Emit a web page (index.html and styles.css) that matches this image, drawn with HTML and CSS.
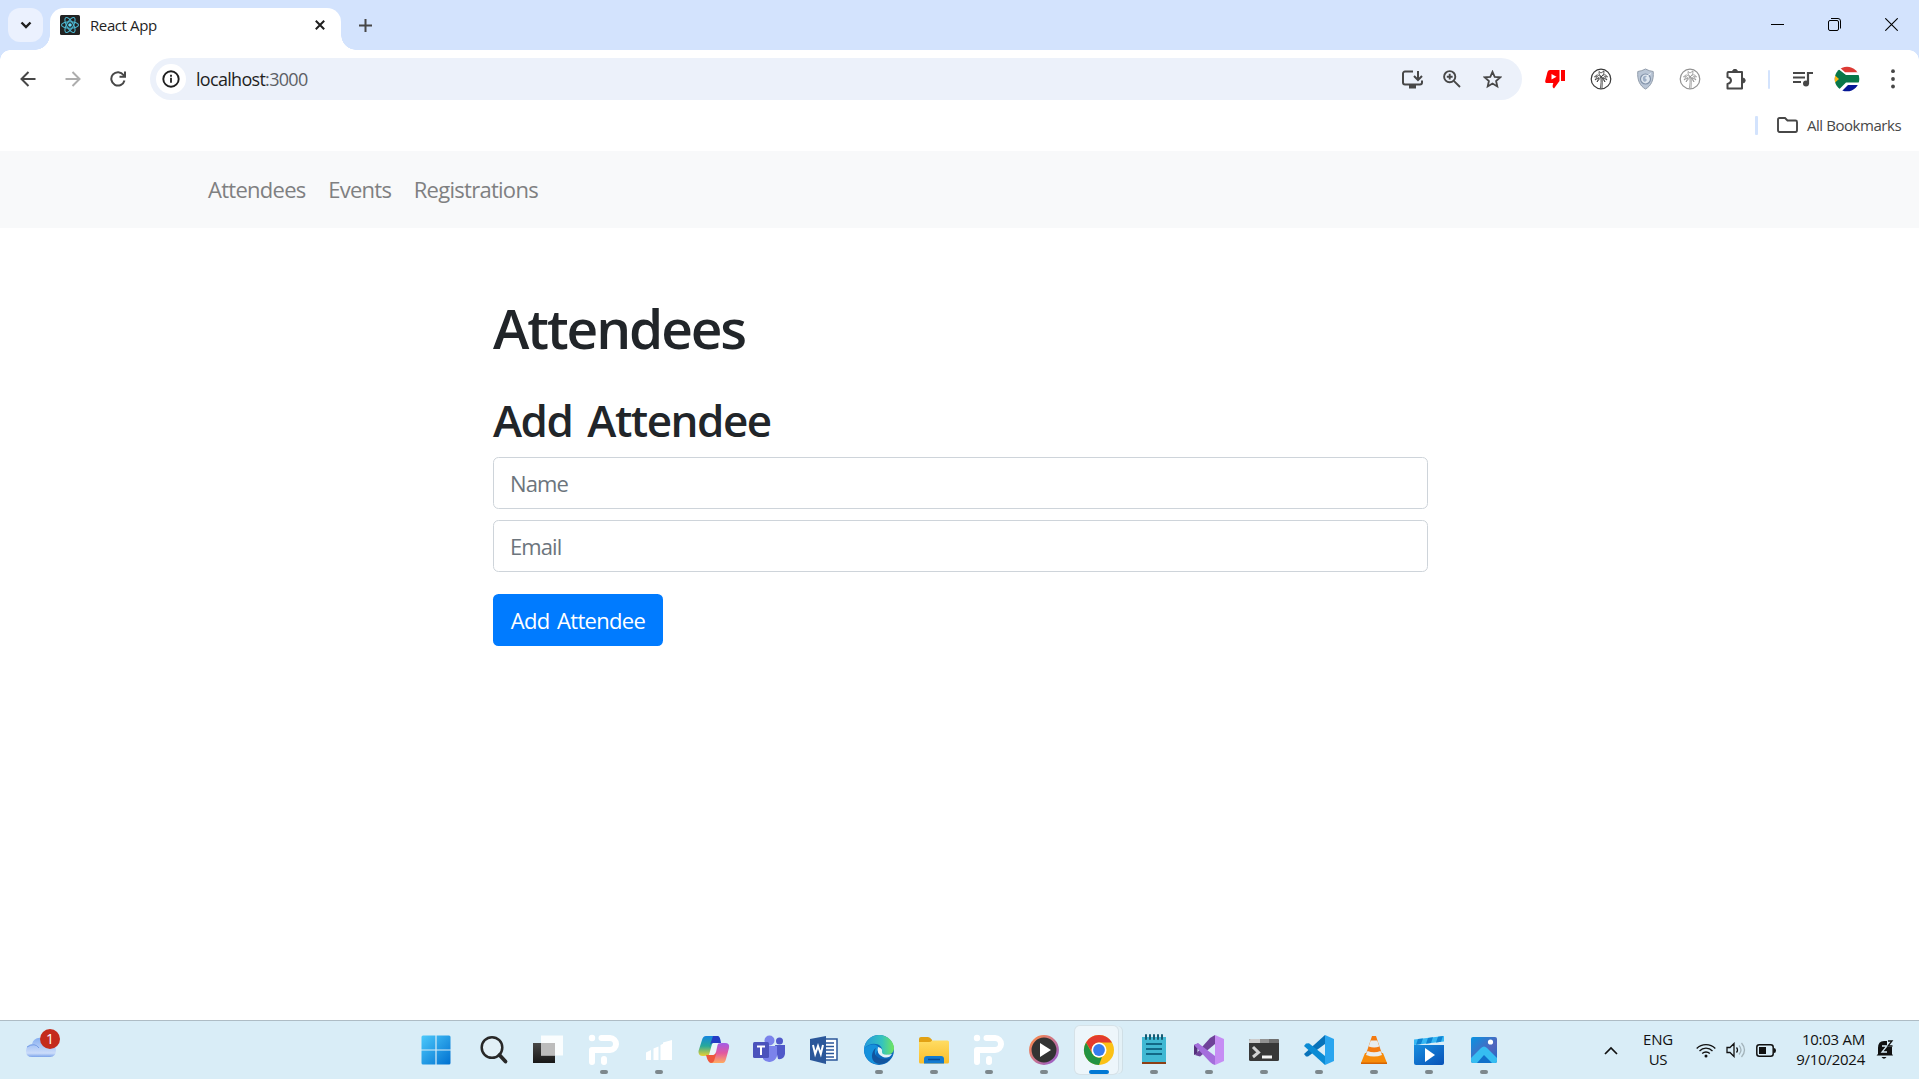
FILE: index.html
```html
<!DOCTYPE html>
<html lang="en">
<head>
<meta charset="utf-8">
<title>React App</title>
<link rel="stylesheet" href="styles.css">
</head>
<body>
<header class="tabstrip">
  <button class="tab-search" aria-label="Search tabs"><svg width="12" height="8" viewBox="0 0 12 8"><path d="M1.500 1.500 6 6l4.500-4.500" fill="none" stroke="#1f1f1f" stroke-width="2.400"/></svg></button>
  <div class="tab">
    <svg width="20" height="20" viewBox="0 0 20 20"><rect width="20" height="20" rx="1.500" fill="#222"/><g fill="none" stroke="#4cb8d2" stroke-width="1.100"><ellipse cx="10" cy="10" rx="8.500" ry="3.300"/><ellipse cx="10" cy="10" rx="8.500" ry="3.300" transform="rotate(60 10 10)"/><ellipse cx="10" cy="10" rx="8.500" ry="3.300" transform="rotate(120 10 10)"/></g><circle cx="10" cy="10" r="1.800" fill="#61dafb"/></svg>
    <span class="tab-title">React App</span>
    <svg class="tab-close" width="10" height="10" viewBox="0 0 10 10"><path d="M.8.800 9.200 9.200M9.200.800.800 9.200" stroke="#1f1f1f" stroke-width="2"/></svg>
  </div>
  <svg class="new-tab" width="13" height="13" viewBox="0 0 13 13"><path d="M6.500 0v13M0 6.500h13" stroke="#474747" stroke-width="2"/></svg>
  <div class="window-buttons">
    <svg width="13" height="13" viewBox="0 0 13 13"><path d="M0 6.500h13" stroke="#000"/></svg>
    <svg width="13" height="13" viewBox="0 0 13 13" fill="none" stroke="#000"><rect x=".5" y="2.500" width="10" height="10" rx="1.500"/><path d="M3 .5h7a2.500 2.500 0 0 1 2.500 2.500v7.500"/></svg>
    <svg width="13" height="13" viewBox="0 0 13 13"><path d="M.3.300 12.700 12.700M12.700.300.300 12.700" stroke="#000" stroke-width="1.100"/></svg>
  </div>
</header>
<div class="toolbar">
  <nav class="history">
    <svg width="16" height="16" viewBox="0 0 16 16" fill="none" stroke="#474747" stroke-width="2"><path d="M15.500 8H2M8.500 1 1.500 8l7 7"/></svg>
    <svg width="16" height="16" viewBox="0 0 16 16" fill="none" stroke="#adadad" stroke-width="2"><path d="M.5 8H14M7.500 1l7 7-7 7"/></svg>
    <svg width="16" height="16" viewBox="0 0 16 16" fill="none" stroke="#474747" stroke-width="2"><path d="M14.500 9.500A6.700 6.700 0 1 1 13.500 4l1 1.500M15 .5v5.300H9.500"/></svg>
  </nav>
  <div class="omnibox">
    <span class="site-info"><svg width="18" height="18" viewBox="0 0 18 18"><circle cx="9" cy="9" r="7.700" fill="none" stroke="#1f1f1f" stroke-width="1.900"/><path d="M9 7.700v5M9 4.800v2" stroke="#1f1f1f" stroke-width="1.800"/></svg></span>
    <span class="url">localhost<i>:3000</i></span>
    <svg class="omni-install" width="21" height="19" viewBox="0 0 21 19" fill="none" stroke="#474747" stroke-width="2"><path d="M11 1.500H3a2 2 0 0 0-2 2v9a2 2 0 0 0 2 2h15a2 2 0 0 0 2-2v-2M16 1v9M12 6l4 4 4-4"/><path d="M7 15h7v3.500H7z" fill="#474747" stroke="none"/></svg>
    <svg class="omni-zoom" width="18" height="18" viewBox="0 0 18 18" fill="none" stroke="#474747" stroke-width="1.900"><circle cx="6.700" cy="6.700" r="5.600"/><path d="M10.800 10.800 17 17M6.700 3.800v5.800M3.800 6.700h5.800"/></svg>
    <svg class="omni-star" width="19" height="19" viewBox="0 0 19 19"><path d="m9.500 1.800 2.200 5 5.600.5-4.200 3.700 1.200 5.500-4.800-2.900-4.800 2.900L5.900 11 1.700 7.300l5.600-.5z" fill="none" stroke="#474747" stroke-width="1.800"/></svg>
  </div>
  <div class="extensions">
    <svg width="20" height="20" viewBox="0 0 20 20" fill="red"><path d="M5 1h9.500v11L9 19.500c-2-1-1.500-3-.7-5.500H1.500C.3 14 0 12.700.3 11.500L2.500 3C3 1.700 3.800 1 5 1zM16 1h4v11h-4z"/><path d="m6.500 5 5 2.800-5 2.800z" fill="#fff"/></svg>
    <svg width="22" height="22" viewBox="0 0 22 22" fill="none" stroke="#383838"><circle cx="11" cy="11" r="9.800" stroke-width="1.200"/><path d="M10.500 20q.9-6 .5-11M12 20q.6-6 0-11M11 9Q7 5 4.500 9l3-.5L5 12l4-2.500-2 4.500 4-5Q15 4.500 17.500 9l-3-.5 2.500 3.500-4-2.500 2 4.500-3.500-5Q8 6 9 3.500l2 1.500 3-2q1 3-3 6z" stroke-width=".8"/></svg>
    <svg width="17" height="22" viewBox="0 0 17 22"><path d="M8.500 1Q12 3 16.200 3.500C17 12 14 18 8.500 21 3 18 0 12 .8 3.500Q5 3 8.500 1z" fill="#bac6d6" stroke="#929dab"/><circle cx="8.500" cy="11" r="5" fill="#dfe7f0" stroke="#8393a9" stroke-width="1.200"/><path d="M6 9q2-2 4-1l-2 2 2 2-2 2q-3-1-2-5z" fill="#9fb0c6"/><path d="m10 8 4-2.500" stroke="#eef3f8"/></svg>
    <svg width="22" height="22" viewBox="0 0 22 22" fill="none" stroke="#929292"><circle cx="11" cy="11" r="9.800" stroke-width="1.200"/><path d="M10.500 20q.9-6 .5-11M12 20q.6-6 0-11M11 9Q7 5 4.500 9l3-.5L5 12l4-2.500-2 4.500 4-5Q15 4.500 17.500 9l-3-.5 2.500 3.500-4-2.500 2 4.500-3.500-5Q8 6 9 3.500l2 1.500 3-2q1 3-3 6z" stroke-width=".8"/></svg>
    <svg width="21" height="21" viewBox="0 0 21 21"><path d="M2.500 3H16v16.500H1.500V15q3.500-.8 3.500-3.500T1.500 8V4q0-1 1-1z" fill="none" stroke="#474747" stroke-width="2" stroke-linejoin="round"/><path d="M6.500 3a2.500 2.700 0 0 1 5 0zM16.500 9a2.700 2.500 0 0 1 0 5z" fill="#474747" stroke="#474747"/></svg>
  </div>
  <span class="divider"></span>
  <svg class="media" width="20" height="17" viewBox="0 0 20 17"><path d="M0 2h12M0 6.500h12M0 11h8" stroke="#474747" stroke-width="2"/><circle cx="13" cy="12.500" r="3" fill="#474747"/><path d="M15 13V2h5" fill="none" stroke="#474747" stroke-width="2.200"/></svg>
  <svg class="profile" width="26" height="26" viewBox="0 0 26 26"><clipPath id="round"><circle cx="13" cy="13" r="12.300"/></clipPath><g clip-path="url(#round)"><path fill="#fff" d="M0 0h26v26H0z"/><path fill="#dd3a34" d="M4 0h22v6.200H11z"/><path fill="#051796" d="M7 26 14 19h12v7z"/><path fill="#087749" d="M0 2h3l9 7h14v7.500H12L5 23.500H0z"/><path fill="#fbb615" d="M0 8.500 5 13l-5 4.500z"/></g></svg>
  <svg class="menu" width="4" height="20" viewBox="0 0 4 20" fill="#474747"><circle cx="2" cy="2.200" r="1.900"/><circle cx="2" cy="10" r="1.900"/><circle cx="2" cy="17.500" r="1.900"/></svg>
</div>
<div class="bookmarks">
  <span class="divider wide"></span>
  <svg width="21" height="16" viewBox="0 0 21 16"><path d="M1 13V2.500Q1 1 2.500 1H8l2.500 2.500h8Q20 3.500 20 5v8q0 2-1.500 2h-16Q1 15 1 13z" fill="none" stroke="#474747" stroke-width="1.900"/></svg>
  <span class="bookmarks-label">All Bookmarks</span>
</div>
<main class="page">
  <nav class="navbar"><a>Attendees</a><a>Events</a><a>Registrations</a></nav>
  <section class="content">
    <h1>Attendees</h1>
    <h2>Add Attendee</h2>
    <form>
      <input type="text" placeholder="Name">
      <input type="text" placeholder="Email">
      <button type="button" class="submit">Add Attendee</button>
    </form>
  </section>
</main>
<footer class="taskbar">
  <svg width="0" height="0" class="defs"><defs>
    <linearGradient id="win" x1="0" y1="0" x2="1" y2="1"><stop stop-color="#4cc9fb"/><stop offset="1" stop-color="#0070d0"/></linearGradient>
    <linearGradient id="dark" x2="0" y2="1"><stop stop-color="#484848"/><stop offset="1" stop-color="#171717"/></linearGradient>
    <linearGradient id="cpl" x2="0" y2="1"><stop stop-color="#1585df"/><stop offset=".5" stop-color="#27a99a"/><stop offset="1" stop-color="#ecd12f"/></linearGradient>
    <linearGradient id="cpr" x2="0" y2="1"><stop stop-color="#a25ce6"/><stop offset=".5" stop-color="#e2589f"/><stop offset="1" stop-color="#ffac61"/></linearGradient>
    <linearGradient id="edge"><stop stop-color="#2499dd"/><stop offset=".6" stop-color="#35c3be"/><stop offset="1" stop-color="#71e65c"/></linearGradient>
    <linearGradient id="fold" x2="0" y2="1"><stop stop-color="#ffdc63"/><stop offset="1" stop-color="#fabd29"/></linearGradient>
    <linearGradient id="ring" x2="1" y2="1"><stop stop-color="#ff8b45"/><stop offset="1" stop-color="#945bd2"/></linearGradient>
    <linearGradient id="mov" x2="1" y2="1"><stop stop-color="#178edf"/><stop offset="1" stop-color="#0951b7"/></linearGradient>
    <linearGradient id="pho" x2="1" y2="1"><stop stop-color="#0794e2"/><stop offset=".6" stop-color="#5165bd"/><stop offset="1" stop-color="#166ecb"/></linearGradient>
    <linearGradient id="cloud" x2="0" y2="1"><stop stop-color="#88aff0"/><stop offset=".8" stop-color="#cbdcfa"/><stop offset="1" stop-color="#7ba3ea"/></linearGradient>
    <symbol id="ip" viewBox="0 0 32 32"><g fill="none" stroke="#fff" stroke-linecap="round" stroke-linejoin="round"><path d="M4 28V16h18a5.500 5.500 0 0 0 0-12H13.500" stroke-width="6"/><path d="M16 25v3" stroke-width="6"/></g><circle cx="4" cy="4" r="3.200" fill="#fff"/></symbol>
  </defs></svg>
  <div class="weather"><svg width="32" height="24" viewBox="0 0 32 24"><path d="M7 9a8.500 8.500 0 0 1 16-1 7 7 0 0 1 8 7q0 7-6 7H7q-6 0-6-6 0-6 6-7z" fill="url(#cloud)"/><path d="M2 12q8-5 12 1" fill="none" stroke="#769ee7"/></svg><span class="badge">1</span></div>
  <div class="apps">
    <span class="app start"><svg viewBox="0 0 32 32"><rect x="1.500" y="1.500" width="29" height="29" rx="1.500" fill="url(#win)"/><path d="M16 1v30M1 16h30" stroke="#d9edf7" stroke-width="1.200"/></svg></span>
    <span class="app"><svg viewBox="0 0 32 32" fill="none" stroke="#282828"><circle cx="14" cy="13.500" r="10.300" stroke-width="2.500" fill="#e2f0f7"/><path d="m21.500 21 6 6.500" stroke-width="3.800" stroke-linecap="round"/></svg></span>
    <span class="app"><svg viewBox="0 0 32 32"><path d="M0 9h22v20H0z" fill="url(#dark)"/><path d="M8 1.500h22v20H8z" fill="#fff" opacity=".85"/><path d="M8 9h14v12.500H8z" fill="#bcbcbc"/></svg></span>
    <span class="app on"><svg><use href="#ip"/></svg></span>
    <span class="app on"><svg viewBox="0 0 32 32" fill="#fff"><path d="M3 18.500 8 16v10H3zM10.500 14.500l5-2V26h-5zM17.500 11l3-1.500V26h-3zM20 8.500 29 6v20h-9z"/></svg></span>
    <span class="app"><svg viewBox="0 0 32 32"><path d="M8 2h10q3 0 4 4l-7 2q-2 12-4 13-2 1-6 1-5 0-4.500-5L4 6q1-4 4-4z" fill="url(#cpl)"/><path d="M15 2h5q2 0 3 7h-8q-3 0-4 5z" fill="#233bc4"/><path d="M24 29H14q-3 0-4-4l5-2q2-9 4-12 1-2 5-2h3q5 0 4 5l-3 11q-1 4-3 4z" fill="url(#cpr)"/><path d="M8 21h7q3 0 4-4l-3 10q-1 2-3 2-3 0-5-8z" fill="#ee573c"/><path d="m14 10-3 11h4q2 0 3-3l2-9h-3q-2 0-3 1z" fill="#eaf5f8"/></svg></span>
    <span class="app"><svg viewBox="0 0 32 32"><circle cx="26.500" cy="7" r="3.500" fill="#5059c9"/><path d="M22 11h10v9q-1 6-7 5z" fill="#5059c9"/><circle cx="16.500" cy="6.500" r="5" fill="#7b83eb"/><path d="M10 12h14v10a8 8 0 0 1-14 3z" fill="#7b83eb"/><rect y="8" width="16" height="16" rx="1.500" fill="#4b53bc"/><path d="M4 12.500h8M8 12.500V21" stroke="#fff" stroke-width="2"/></svg></span>
    <span class="app"><svg viewBox="0 0 32 32"><path d="M16 5h13v21H16z" fill="#fff" stroke="#2b579a" stroke-width="1.500"/><path d="M17 9h9M17 12.500h9M17 16h9M17 19.500h9M17 23h9" stroke="#2b579a" stroke-width="1.400"/><path d="M2 5 18 2v28L2 26z" fill="#2b579a"/><path d="m5 11 2.200 9L10 12l2.800 8L15 11" fill="none" stroke="#fff" stroke-width="2"/></svg></span>
    <span class="app on"><svg viewBox="0 0 32 32"><circle cx="16" cy="16" r="15" fill="#0c68bd"/><path d="M1 15C2 6 9 1 16 1c9 0 15 7 15 13 0 5-4 7-8 7-3 0-5-1-4-3C21 10 8 6 1 15z" fill="url(#edge)"/><path d="M1 15c4-6 15-6 15 0-6 5-2 12 4 14-9 4-19-3-19-14z" fill="#1591dc"/><path d="M13 14c-4 6 2 14 15 10-6 9-20 8-19-3 .4-3 2-6 4-7z" fill="#12559f"/><path d="M15 13q5 1 4 5 0 4 10 2-3 5-9 3-7-3-5-10z" fill="#e3f2f7"/></svg></span>
    <span class="app on"><svg viewBox="0 0 32 32"><path d="M1 8V5q0-2 2-2h7q2 0 4 3v4H1z" fill="#e2a114"/><rect x="1" y="6.500" width="30" height="23" rx="1.500" fill="url(#fold)"/><path d="M1 5h11q1.500 0 2 1.500Q13 8 11 8H1z" fill="#e2a114"/><path d="M6 29.500V25q0-3 3-3h14q3 0 3 3v4.500z" fill="#137bd0"/><path d="M10 25.500h12" stroke="#084b93" stroke-width="1.500"/></svg></span>
    <span class="app on"><svg><use href="#ip"/></svg></span>
    <span class="app on"><svg viewBox="0 0 32 32"><circle cx="16" cy="16" r="13.700" fill="#333" stroke="url(#ring)" stroke-width="2.500"/><path d="m12 9 11 7-11 7z" fill="#fff"/></svg></span>
    <span class="app on active"><svg viewBox="0 0 32 32"><circle cx="16" cy="16" r="15" fill="#fbc116"/><path d="M3 8.500A15 15 0 0 1 29 8.500H16a7.500 7.500 0 0 0-6.500 11z" fill="#e33b2e"/><path d="M3 8.500 9.500 20A7.500 7.500 0 0 0 19 23l-3 8A15 15 0 0 1 3 8.500z" fill="#229342"/><circle cx="16" cy="16" r="7.500" fill="#fff"/><circle cx="16" cy="16" r="5.900" fill="#367ced"/></svg></span>
    <span class="app on"><svg viewBox="0 0 32 32"><path d="M4 26h24v4H4z" fill="#8d3f15"/><rect x="4" y="3" width="24" height="25" fill="#40b8d3"/><path d="M8 10h16M8 15h16M8 20h16" stroke="#126887" stroke-width="2"/><path d="M7 1v4M11 1v4M15 1v4M19 1v4M23 1v4" transform="translate(1)" stroke="#155b73" stroke-width="2" stroke-linecap="round"/></svg></span>
    <span class="app on"><svg viewBox="0 0 32 32"><path d="M1 11 5 9.500l4 4-3.500 2.500v3L1 21z" fill="#55307c"/><path d="m4.500 14.500 4 2.500-4 2.500z" fill="#d9edf7"/><path d="M22 1v9L7 22.500 2 21 17 4z" fill="#6e4299"/><path d="m1 11 4-2 17 13v9q-2 0-5-3z" fill="#a46edc"/><path d="m22 1 9 4v22l-9 4z" fill="#c68df4"/></svg></span>
    <span class="app on"><svg viewBox="0 0 32 32"><rect x="1" y="5" width="30" height="22" rx="1.500" fill="#383838"/><path d="M1 9V6.500Q1 5 2.500 5H12v4z" fill="#ccc"/><path d="M12 5h9v4h-9z" fill="#929292"/><path d="M21 5h8.500Q31 5 31 6.500V9H21z" fill="#6f6f6f"/><path d="m5 13 5.500 5.500L5 23" fill="none" stroke="#d2d2d2" stroke-width="3"/><path d="M14 23h10" stroke="#f5f5f5" stroke-width="3"/></svg></span>
    <span class="app on"><svg viewBox="0 0 32 32"><path d="m1 20 2 2.500h2L22 10V1z" fill="#0872b9"/><path d="m1 12 2-2.500 3-.3L22 22v9z" fill="#0b8bd4"/><path d="m22 1 9 4v22l-9 4z" fill="#2aa5ef"/></svg></span>
    <span class="app on"><svg viewBox="0 0 32 32"><path d="M7 19h18l4 10H3z" fill="#f78c0b"/><path d="M3 28.500h26v1.500H3z" fill="#d56403"/><path d="M14 2h4l6 18q-8 4-16 0z" fill="#f47b11"/><path d="M12.700 6.500h6.600l2 6q-5 2-10.600 0zM9.500 17q6.500 2.500 13 0l1.500 4q-8 3-16 0z" fill="#e8edef"/></svg></span>
    <span class="app on"><svg viewBox="0 0 32 32"><path d="M1 11h30v18q0 2-2 2H3q-2 0-2-2z" fill="url(#mov)"/><path d="M1 5.500 31 2v5.500L1 11z" fill="#35b7f3"/><path d="m5 5 5-.6L8 10l-5 .7zM15 4l5-.7L18 9l-5 .7zM25 2.700l5-.7-2 5.800-5 .7z" fill="#0f83d2"/><path d="m12 14 10 7-10 7z" fill="#fff"/></svg></span>
    <span class="app on"><svg viewBox="0 0 32 32"><rect x="3" y="3" width="26" height="26" rx="2" fill="url(#pho)"/><path d="m3 24 10-10q3-3 6 0l10 10v3q0 2-2 2H5q-2 0-2-2z" fill="#36bdf1"/><path d="m9 29 7-8 8 8z" fill="#1170ca"/><circle cx="22.500" cy="8" r="2.600" fill="#fff"/></svg></span>
  </div>
  <div class="tray">
    <svg class="chev" width="14" height="9" viewBox="0 0 14 9"><path d="m1 8 6-6 6 6" fill="none" stroke="#111" stroke-width="1.700"/></svg>
    <div class="lang"><span>ENG</span><span>US</span></div>
    <svg class="wifi" width="20" height="16" viewBox="0 0 20 16" fill="none" stroke="#111" stroke-width="1.300"><path d="M.7 6.500a13 13 0 0 1 18.600 0M3.500 9a9 9 0 0 1 13 0M6.200 11.500a5.500 5.500 0 0 1 7.600 0"/><circle cx="10" cy="14" r="1.500" fill="#111" stroke="none"/></svg>
    <svg class="sound" width="20" height="16" viewBox="0 0 20 16" fill="none" stroke="#111" stroke-width="1.300"><path d="M1 5.500h3l4-4v13l-4-4H1zM10.500 5.500q2 2.500 0 5"/><path d="M13 3.500q4 4.500 0 9M15.500 1q6 7 0 14" stroke="#a3b3ba"/></svg>
    <svg class="battery" width="21" height="13" viewBox="0 0 21 13"><rect x=".8" y=".8" width="16.400" height="11.400" rx="2.500" fill="none" stroke="#111" stroke-width="1.500"/><rect x="3" y="3" width="7" height="7" fill="#111"/><path d="M18 4q2 0 2 2.500T18 9z" fill="#111"/></svg>
    <div class="clock"><span>10:03 AM</span><span>9/10/2024</span></div>
    <svg class="bell" width="18" height="20" viewBox="0 0 18 20"><path d="M2 14V8q0-7 6-7h3q5 1 5 6v7l1 1.500H.5zM5.500 17h5q-2.500 3.500-5 0z" fill="#111"/><path d="M6 6h5l-5 6h5" fill="none" stroke="#d9edf7" stroke-width="1.300"/><path d="M11-1h7v8h-7z" fill="#d9edf7"/><path d="M12 1h4l-4 5h4.500" fill="none" stroke="#111" stroke-width="1.300"/></svg>
  </div>
</footer>
</body>
</html>
```
FILE: styles.css
```css
* { box-sizing: border-box; }
body { margin: 0; width: 1919px; height: 1079px; overflow: hidden; display: flex; flex-direction: column; background: #fff; color: #212529; font-family: "Open Sans", "Noto Sans", sans-serif; }
svg { display: block; flex: none; }
button { border: 0; padding: 0; font-family: inherit; }

.tabstrip { height: 50px; flex: none; display: flex; align-items: flex-start; padding: 8px 21px 0 8px; background: #d3e3fd; }
.tab-search { width: 35px; height: 34px; border-radius: 12px; background: #ebf1fe; display: flex; align-items: center; justify-content: center; }
.tab { position: relative; width: 291px; height: 42px; margin-left: 7px; padding: 0 16px 8px 10px; display: flex; align-items: center; background: #fff; border-radius: 14px 14px 0 0; }
.tab::before, .tab::after { content: ""; position: absolute; bottom: 0; width: 15px; height: 15px; }
.tab::before { right: 100%; background: radial-gradient(circle at 0 0, transparent 14.5px, #fff 15px); }
.tab::after { left: 100%; background: radial-gradient(circle at 100% 0, transparent 14.5px, #fff 15px); }
.tab-title { margin-left: 10px; font-size: 15px; line-height: 20px; letter-spacing: -0.4px; color: #1f1f1f; white-space: nowrap; }
.tab-close { margin-left: auto; }
.new-tab { margin: 11px 0 0 18px; }
.window-buttons { margin: 10px 0 0 auto; display: flex; gap: 44px; }

.toolbar { position: relative; height: 58px; flex: none; display: flex; align-items: center; padding-left: 20px; background: #fff; }
.toolbar::before, .toolbar::after { content: ""; position: absolute; top: 0; width: 10px; height: 10px; }
.toolbar::before { left: 0; background: radial-gradient(circle at 100% 100%, transparent 9.5px, #d3e3fd 10px); }
.toolbar::after { right: 0; background: radial-gradient(circle at 0 100%, transparent 9.5px, #d3e3fd 10px); }
.history { display: flex; gap: 29px; }
.omnibox { width: 1372px; height: 42px; margin-left: 24px; padding: 0 20px 0 6px; border-radius: 21px; background: #ecf1fa; display: flex; align-items: center; }
.site-info { width: 30px; height: 30px; border-radius: 50%; background: #fff; display: flex; align-items: center; justify-content: center; }
.url { margin-left: 10px; margin-right: auto; font-size: 18px; line-height: 24px; letter-spacing: -0.7px; color: #1f1f1f; white-space: nowrap; }
.url i { font-style: normal; color: #5c5f65; }
.omni-zoom { margin-left: 20px; }
.omni-star { margin-left: 22px; }
.extensions { width: 202px; margin-left: 23px; display: flex; align-items: center; justify-content: space-between; }
.divider { width: 2px; height: 19px; border-radius: 1px; background: #d3e3fd; margin-left: 21px; }
.media { margin-left: 23px; }
.profile { margin-left: 21px; }
.menu { margin-left: 31px; }
.bookmarks { height: 43px; flex: none; display: flex; align-items: center; justify-content: flex-end; padding: 0 17px 9px 0; }
.divider.wide { width: 3px; margin: 0 19px 0 0; }
.bookmarks-label { width: 95px; margin-left: 9px; font-size: 15px; line-height: 20px; letter-spacing: -0.45px; color: #474747; white-space: nowrap; }

.page { flex: 1; min-height: 0; }
.navbar { height: 77px; display: flex; align-items: center; gap: 22.5px; padding: 0 0 0 208px; background: #f8f9fa; color: #7f8081; font-size: 22px; line-height: 33px; }
.navbar a { white-space: nowrap; letter-spacing: -0.72px; }
.content { width: 935px; margin-left: 493px; padding-top: 67px; }
h1, h2 { margin: 0; font-weight: 600; line-height: 1.2; white-space: nowrap; }
h1 { font-size: 55px; letter-spacing: -2.1px; }
h2 { font-size: 44px; margin-top: 33px; letter-spacing: -1.5px; word-spacing: 5px; }
form { margin-top: 10px; display: flex; flex-direction: column; align-items: flex-start; gap: 11px; }
input { width: 935px; height: 52px; padding: 0 16px; border: 1px solid #ced4da; border-radius: 5.5px; font-family: inherit; font-size: 22px; letter-spacing: -0.9px; background: #fff; }
input::placeholder { color: #6c757d; opacity: 1; }
.submit { width: 170px; height: 52px; margin-top: 11px; border-radius: 5.5px; background: #007bff; color: #fff; font-size: 22px; letter-spacing: -0.7px; word-spacing: 2.5px; white-space: nowrap; }

.taskbar { height: 59px; flex: none; display: flex; background: #d9edf7; border-top: 1px solid #aebcc5; color: #111; }
.defs { position: absolute; }
.weather { position: relative; width: 411px; flex: none; padding: 14px 0 0 25px; }
.badge { position: absolute; left: 40px; top: 8px; width: 20px; height: 20px; border-radius: 50%; background: #c42b1c; color: #fff; font-size: 14px; line-height: 20px; text-align: center; }
.apps { display: flex; flex: none; }
.app { width: 55px; height: 58px; display: flex; flex-direction: column; align-items: center; padding-top: 13px; }
.app svg { width: 32px; height: 32px; }
.start svg { margin-right: 5px; }
.on::after { content: ""; width: 8px; height: 4px; margin-top: 4px; border-radius: 2px; background: #7d878c; }
.app.active { width: 43px; height: 48px; margin: 5px 8px 0 4px; padding: 8px 0 0 5px; border-radius: 5px; background: #edf6fb; box-shadow: 0 0 0 1px #d6e2e8, 4px 0 0 #e4f1f7, 5px 0 0 #d0dfe6; }
.active::after { width: 20px; background: #0078d4; }
.tray { display: flex; align-items: center; flex: none; margin-left: 93px; font-size: 15px; line-height: 20px; letter-spacing: -0.25px; }
.lang, .clock { display: flex; flex-direction: column; white-space: nowrap; padding-bottom: 2px; }
.lang { width: 30px; margin-left: 25px; align-items: center; }
.wifi { margin-left: 23px; }
.sound { margin-left: 10px; }
.battery { margin-left: 10px; }
.clock { width: 80px; margin-left: 8px; align-items: flex-end; }
.bell { margin-left: 11px; }
```
